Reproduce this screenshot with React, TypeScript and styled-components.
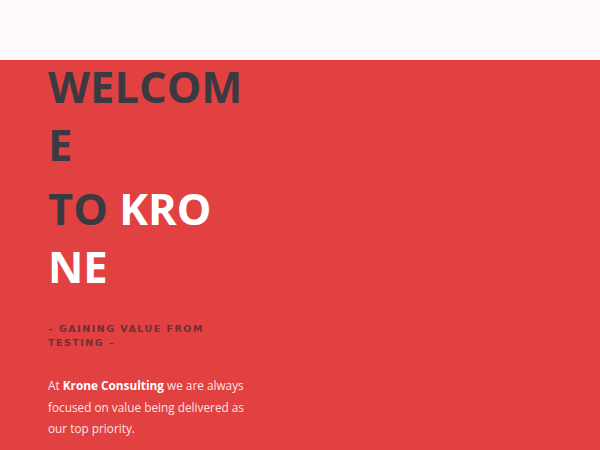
import { createGlobalStyle } from 'styled-components';
import styled from 'styled-components';

const GlobalStyle = createGlobalStyle`
  html, body {
    margin: 0;
    padding: 0;
    background: #e24141;
  }
  body {
    font-family: 'Open Sans', 'Liberation Sans', sans-serif;
    overflow: hidden;
  }
`;

const StyledPage = styled.div`
  width: 600px;
  height: 450px;
  display: flex;
  flex-direction: column;
  background: #e24141;
`;

const StyledHeader = styled.header`
  height: 60px;
  flex-shrink: 0;
  background: #fefafa;
`;

const StyledHero = styled.section`
  flex: 1;
  padding: 0 0 0 48px;
`;

const StyledContent = styled.div`
  width: 195px;
`;

const StyledTitle = styled.h1`
  margin: -2px 0 0;
  font-family: 'Open Sans', sans-serif;
  font-size: 43.5px;
  font-weight: 700;
  line-height: 58px;
  word-break: break-all;
  color: #3b3a43;
`;

const StyledTitleLine = styled.span`
  display: block;
  & + & {
    margin-top: 6px;
  }
`;

const StyledWhite = styled.span`
  color: #ffffff;
`;

const StyledTagline = styled.h4`
  margin: 26px 0 0;
  font-family: 'DejaVu Sans', 'Open Sans', sans-serif;
  font-size: 9.5px;
  font-weight: 700;
  letter-spacing: 1.5px;
  line-height: 14px;
  color: #6b3038;
  text-transform: uppercase;
`;

const StyledText = styled.p`
  margin: 25px 0 0;
  width: 200px;
  font-size: 11.8px;
  line-height: 21.5px;
  color: #fbe3e3;
`;

const StyledStrong = styled.strong`
  color: #ffffff;
  font-weight: 700;
`;

const App = (): JSX.Element => {
  return (
    <StyledPage>
      <GlobalStyle />
      <StyledHeader />
      <StyledHero>
        <StyledContent>
          <StyledTitle>
            <StyledTitleLine>WELCOME</StyledTitleLine>
            <StyledTitleLine>
              TO <StyledWhite>KRONE</StyledWhite>
            </StyledTitleLine>
          </StyledTitle>
          <StyledTagline>– Gaining value from testing –</StyledTagline>
          <StyledText>
            At <StyledStrong>Krone Consulting</StyledStrong> we are always focused on value
            being delivered as our top priority.
          </StyledText>
        </StyledContent>
      </StyledHero>
    </StyledPage>
  );
};

export default App;
